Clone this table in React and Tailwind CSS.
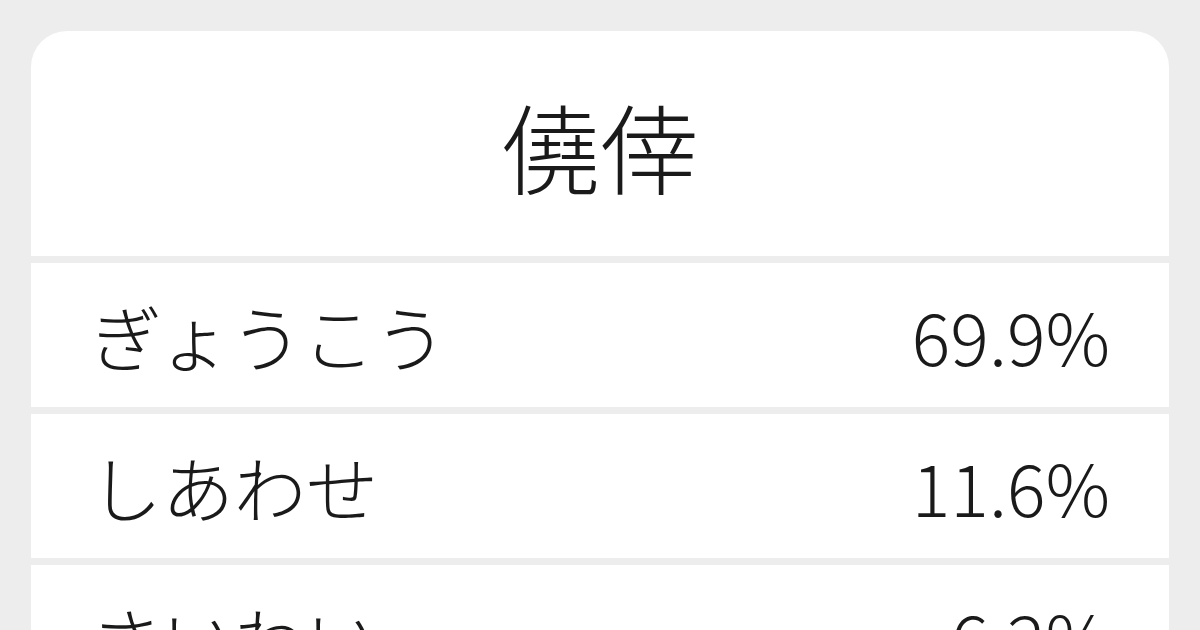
export default function App() {
  const rows = [
    ["ぎょうこう", "69.9%"],
    ["しあわせ", "11.6%"],
    ["さいわい", "6.2%"],
  ];
  const font = { fontFamily: '"Noto Sans CJK JP Light", "Noto Sans CJK JP DemiLight", "Noto Sans CJK JP", "Noto Sans", sans-serif' };
  return (
    <div className="w-[1200px] h-[630px] overflow-hidden bg-[#ededed] pt-[31px] px-[31px]" style={font}>
      <div className="rounded-[36px] overflow-hidden bg-[#ededed] flex flex-col gap-[7px] text-[#1a1a1a]">
        <div className="bg-white h-[225px] flex items-center justify-center">
          <span className="text-[98px] font-light leading-none">僥倖</span>
        </div>
        {rows.map(([k, v]) => (
          <div key={k} className="bg-white h-[144px] shrink-0 flex items-center justify-between pl-[59px] pr-[59px]">
            <span className="text-[72px] font-light leading-none">{k}</span>
            <span className="text-[72px] font-light leading-none">{v}</span>
          </div>
        ))}
      </div>
    </div>
  );
}
